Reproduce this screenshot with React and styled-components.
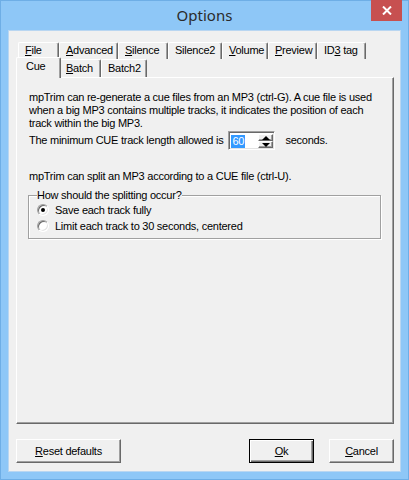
import React from 'react';
import styled, { createGlobalStyle } from 'styled-components';

const GlobalStyle = createGlobalStyle`
  html, body {
    margin: 0;
    padding: 0;
  }
  body {
    width: 409px;
    height: 480px;
    overflow: hidden;
    background: #8ec7f7;
    font-family: "Liberation Sans", Arial, sans-serif;
  }
`;

const Window = styled.div`
  box-sizing: border-box;
  width: 409px;
  height: 480px;
  display: flex;
  flex-direction: column;
  background: #8ec7f7;
  border: 1px solid #6eaee6;
`;

const TitleBar = styled.div`
  height: 29px;
  flex: 0 0 auto;
  display: grid;
  grid-template-columns: 1fr auto 1fr;
  align-items: start;
  .title {
    grid-column: 2;
    font-family: "Noto Sans", "Open Sans", sans-serif;
    font-size: 15px;
    line-height: 29px;
    color: #2b2b2b;
  }
`;

const CloseButton = styled.div`
  grid-column: 3;
  justify-self: end;
  margin-top: -1px;
  margin-right: 6px;
  width: 31px;
  height: 21px;
  background: #c75050;
  display: flex;
  align-items: center;
  justify-content: center;
`;

const Client = styled.div`
  flex: 1 1 auto;
  margin: 0 7px 7px 7px;
  border: 1px solid #b9d6f1;
  background: #f0f0f0;
  padding: 11px 6px 8px 7px;
  display: flex;
  flex-direction: column;
  font-size: 11px;
  letter-spacing: -0.25px;
  color: #000;
`;

const TabStrip = styled.div`
  display: flex;
  flex-direction: column;
  flex: 0 0 auto;
`;

const TabRow = styled.div`
  display: flex;
  height: ${p => p.$height}px;
  padding-left: 2px;
`;

const Tab = styled.div`
  box-sizing: border-box;
  position: relative;
  width: ${p => p.$width + (p.$active ? 4 : 0)}px;
  height: ${p => (p.$active ? 'calc(100% + 3px)' : '100%')};
  margin: ${p => (p.$active ? '-2px -2px -1px -2px' : '0')};
  z-index: ${p => (p.$active ? 2 : 1)};
  padding-left: ${p => (p.$active ? 9 : 6)}px;
  padding-bottom: ${p => (p.$active ? 4 : 1)}px;
  background: #f0f0f0;
  border-top: 1px solid #fff;
  border-left: 1px solid #fff;
  border-right: 1px solid #696969;
  border-top-left-radius: 2px;
  border-top-right-radius: 2px;
  box-shadow: inset -1px 0 0 #a0a0a0;
  display: flex;
  align-items: center;
  white-space: nowrap;
  line-height: 13px;
`;

const Panel = styled.div`
  flex: 1 1 auto;
  position: relative;
  z-index: 1;
  border-top: 1px solid #fff;
  border-left: 1px solid #fff;
  border-right: 1px solid #696969;
  border-bottom: 1px solid #696969;
  box-shadow: inset -1px -1px 0 #a0a0a0;
  padding: 13px 12px 0 12px;
  line-height: 13px;
`;

const Para = styled.p`
  margin: ${p => p.$top || 0}px 0 0 0;
  white-space: nowrap;
`;

const SpinRow = styled.div`
  display: flex;
  align-items: center;
  height: 19px;
  margin-top: 1px;
  white-space: nowrap;
`;

const SpinBox = styled.div`
  box-sizing: border-box;
  width: 47px;
  height: 19px;
  margin: 0 10px 0 5px;
  background: #fff;
  border-style: solid;
  border-width: 1px;
  border-color: #a0a0a0 #fff #fff #a0a0a0;
  box-shadow: inset 1px 1px 0 #696969, inset -1px -1px 0 #e3e3e3;
  display: flex;
  align-items: stretch;
  padding: 2px 1px 1px 2px;
  .value {
    align-self: center;
    background: #3399ff;
    color: #fff;
    padding: 0 1px;
    line-height: 13px;
  }
`;

const SpinButtons = styled.div`
  margin-left: auto;
  width: 15px;
  display: flex;
  flex-direction: column;
`;

const SpinButton = styled.div`
  flex: 1 1 0;
  box-sizing: border-box;
  background: #f0f0f0;
  border-style: solid;
  border-width: 1px;
  border-color: #fff #696969 #696969 #fff;
  box-shadow: inset -1px -1px 0 #a0a0a0;
  display: flex;
  align-items: center;
  justify-content: center;
`;

const Arrow = styled.span`
  width: 0;
  height: 0;
  border-left: 4px solid transparent;
  border-right: 4px solid transparent;
  ${p => (p.$down ? 'border-top: 4px solid #000;' : 'border-bottom: 4px solid #000;')}
`;

const GroupBox = styled.fieldset`
  margin: 6px 0 0 -1px;
  padding: 0 8px 4px 8px;
  border: 1px solid #a0a0a0;
  box-shadow: 1px 1px 0 #fff, inset 1px 1px 0 #fff;
  legend {
    padding: 0;
    line-height: 13px;
    background: #f0f0f0;
  }
`;

const RadioRow = styled.div`
  display: flex;
  align-items: center;
  height: 16px;
  gap: 6px;
  white-space: nowrap;
`;

const RadioMark = styled.span`
  box-sizing: border-box;
  position: relative;
  width: 12px;
  height: 12px;
  border-radius: 50%;
  border: 1px solid;
  border-color: #a0a0a0 #fff #fff #a0a0a0;
  box-shadow: inset 1px 1px 0 #696969, inset -1px -1px 0 #e3e3e3;
  background: #fff;
  &::after {
    content: '';
    display: ${p => (p.$checked ? 'block' : 'none')};
    position: absolute;
    left: 3px;
    top: 3px;
    width: 4px;
    height: 4px;
    border-radius: 50%;
    background: #000;
  }
`;

const Footer = styled.div`
  flex: 0 0 auto;
  display: flex;
  align-items: center;
  margin-top: 15px;
  height: 24px;
  gap: 15px;
`;

const Button = styled.div`
  box-sizing: border-box;
  width: ${p => p.$width}px;
  height: 24px;
  display: flex;
  align-items: center;
  justify-content: center;
  background: #f0f0f0;
  border-style: solid;
  border-width: 1px;
  border-color: ${p => (p.$default ? '#000' : '#fff #696969 #696969 #fff')};
  box-shadow: ${p =>
    p.$default
      ? 'inset 1px 1px 0 #fff, inset -1px -1px 0 #696969, inset -2px -2px 0 #a0a0a0'
      : 'inset -1px -1px 0 #a0a0a0'};
  &:first-child {
    margin-right: auto;
  }
`;

const tabsTop = [
  { label: <><u>F</u>ile</>, width: 41 },
  { label: <><u>A</u>dvanced</>, width: 59 },
  { label: <><u>S</u>ilence</>, width: 50 },
  { label: <>Silence2</>, width: 54 },
  { label: <><u>V</u>olume</>, width: 46 },
  { label: <><u>P</u>review</>, width: 49 },
  { label: <>ID<u>3</u> tag</>, width: 49 },
];

const tabsBottom = [
  { label: <>Cue</>, width: 41, active: true },
  { label: <><u>B</u>atch</>, width: 42 },
  { label: <>Batch2</>, width: 46 },
];

export default function App() {
  return (
    <>
      <GlobalStyle />
      <Window>
        <TitleBar>
          <span className="title">Options</span>
          <CloseButton>
            <svg width="10" height="9" viewBox="0 0 10 9">
              <path d="M1 0.5 L9 8.5 M9 0.5 L1 8.5" stroke="#fff" strokeWidth="2" />
            </svg>
          </CloseButton>
        </TitleBar>
        <Client>
          <TabStrip>
            <TabRow $height={17}>
              {tabsTop.map((t, i) => (
                <Tab key={i} $width={t.width}><span>{t.label}</span></Tab>
              ))}
            </TabRow>
            <TabRow $height={18}>
              {tabsBottom.map((t, i) => (
                <Tab key={i} $width={t.width} $active={t.active}><span>{t.label}</span></Tab>
              ))}
            </TabRow>
          </TabStrip>
          <Panel>
            <Para>
              mpTrim can re-generate a cue files from an MP3 (ctrl-G). A cue file is used<br />
              when a big MP3 contains multiple tracks, it indicates the position of each<br />
              track within the big MP3.
            </Para>
            <SpinRow>
              <span>The minimum CUE track length allowed is</span>
              <SpinBox>
                <span className="value">60</span>
                <SpinButtons>
                  <SpinButton><Arrow /></SpinButton>
                  <SpinButton><Arrow $down /></SpinButton>
                </SpinButtons>
              </SpinBox>
              <span>seconds.</span>
            </SpinRow>
            <Para $top={20}>mpTrim can split an MP3 according to a CUE file (ctrl-U).</Para>
            <GroupBox>
              <legend>How should the splitting occur?</legend>
              <RadioRow>
                <RadioMark $checked />
                <span>Save each track fully</span>
              </RadioRow>
              <RadioRow>
                <RadioMark />
                <span>Limit each track to 30 seconds, centered</span>
              </RadioRow>
            </GroupBox>
          </Panel>
          <Footer>
            <Button $width={105}><span><u>R</u>eset defaults</span></Button>
            <Button $width={65} $default><span><u>O</u>k</span></Button>
            <Button $width={65}><span><u>C</u>ancel</span></Button>
          </Footer>
        </Client>
      </Window>
    </>
  );
}
